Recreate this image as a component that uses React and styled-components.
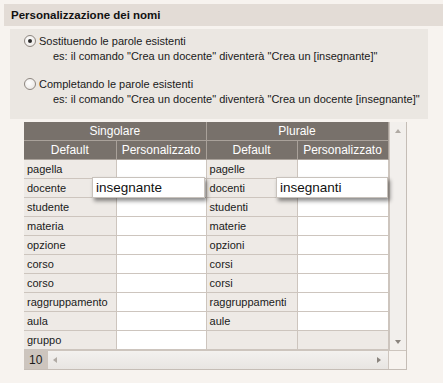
import React from "react";
import styled, { createGlobalStyle } from "styled-components";

const Global = createGlobalStyle`
  html, body { margin: 0; padding: 0; background: #f7f3ef; }
  body { font-family: "Liberation Sans", Arial, sans-serif; color: #1a1a1a; }
`;

const Page = styled.div`
  width: 443px;
  height: 383px;
  padding: 4px 0 0 4px;
  box-sizing: border-box;
  overflow: hidden;
`;

const SectionHeader = styled.div`
  height: 22px;
  line-height: 22px;
  background: #e3dcd6;
  padding-left: 7px;
  font-weight: bold;
  font-size: 11.5px;
  color: #111;
`;

const Panel = styled.div`
  margin: 3px 15px 0 6px;
  background: #ebe7e2;
  padding: 6px 0 13px 14px;
  display: flex;
  flex-direction: column;
`;

const OptionRow = styled.label`
  display: flex;
  align-items: center;
  gap: 3px;
  height: 12px;
  font-size: 11px;
  margin-top: ${(p) => p.$top}px;
`;

const Radio = styled.span`
  width: 10px;
  height: 10px;
  border-radius: 50%;
  border: 1px solid #8d8680;
  background: radial-gradient(circle at 40% 40%, #ffffff, #e6e2de);
  display: flex;
  align-items: center;
  justify-content: center;
  &::after {
    content: "";
    width: 4px;
    height: 4px;
    border-radius: 50%;
    background: ${(p) => (p.$checked ? "#2a2a2a" : "transparent")};
  }
`;

const Example = styled.div`
  font-size: 11px;
  padding-left: 29px;
  margin-top: 3px;
  line-height: 13px;
`;

const GridWrap = styled.div`
  position: relative;
  margin: 3px 0 0 20px;
  width: 382px;
  border-right: 1px solid #c5bdb6;
  border-bottom: 1px solid #c5bdb6;
`;

const Body = styled.div`
  display: flex;
`;

const Table = styled.table`
  border-collapse: collapse;
  table-layout: fixed;
  width: 364px;
`;

const HeadCell = styled.th`
  background: #78716b;
  color: #fff;
  font-weight: normal;
  font-size: 12px;
  height: 18px;
  padding: 0;
  border: 1px solid #a9a19a;
  border-top: none;
  text-align: center;
  &:first-child { border-left: none; }
`;

const Cell = styled.td`
  height: 18px;
  padding: 0 0 0 3px;
  font-size: 11px;
  white-space: nowrap;
  overflow: hidden;
  background: ${(p) => (p.$edit ? "#ffffff" : "#eeeae6")};
  border: 1px solid #cdc5be;
  &:first-child { border-left: none; }
`;

const VScroll = styled.div`
  width: 17px;
  border-left: 1px solid #cdc5be;
  background: #f2efec;
  display: flex;
  flex-direction: column;
  justify-content: space-between;
  align-items: center;
  padding: 7px 0 6px;
`;

const Arrow = styled.span`
  width: 0;
  height: 0;
  border-style: solid;
  ${(p) =>
    p.$dir === "up"
      ? "border-width: 0 3.5px 4px 3.5px; border-color: transparent transparent #b0aaa4 transparent;"
      : p.$dir === "down"
      ? "border-width: 4px 3.5px 0 3.5px; border-color: #8a847e transparent transparent transparent;"
      : p.$dir === "left"
      ? "border-width: 3.5px 4px 3.5px 0; border-color: transparent #b0aaa4 transparent transparent;"
      : "border-width: 3.5px 0 3.5px 4px; border-color: transparent transparent transparent #8a847e;"}
`;

const Footer = styled.div`
  display: flex;
  height: 18px;
  border-top: 1px solid #cdc5be;
`;

const Count = styled.div`
  width: 24px;
  background: #cdc5be;
  font-size: 12px;
  line-height: 18px;
  padding-left: 5px;
  box-sizing: border-box;
`;

const HScroll = styled.div`
  width: 340px;
  background: linear-gradient(#f3f1ef, #e8e5e2);
  display: flex;
  align-items: center;
  justify-content: space-between;
  padding: 0 7px 0 5px;
  box-sizing: border-box;
`;

const Corner = styled.div`
  width: 17px;
  border-left: 1px solid #cdc5be;
  background: #f7f3ef;
`;

const Editor = styled.div`
  position: absolute;
  top: 55px;
  left: ${(p) => p.$left}px;
  width: ${(p) => p.$width}px;
  height: 21px;
  line-height: 19px;
  box-sizing: border-box;
  background: #fff;
  border: 1px solid #c8c2bc;
  padding-left: 3px;
  font-size: 13.5px;
  color: #111;
  box-shadow: 2px 3px 4px rgba(0, 0, 0, 0.45);
`;

const rows = [
  ["pagella", "", "pagelle", ""],
  ["docente", "", "docenti", ""],
  ["studente", "", "studenti", ""],
  ["materia", "", "materie", ""],
  ["opzione", "", "opzioni", ""],
  ["corso", "", "corsi", ""],
  ["corso", "", "corsi", ""],
  ["raggruppamento", "", "raggruppamenti", ""],
  ["aula", "", "aule", ""],
  ["gruppo", "", null, null],
];

export default function App() {
  return (
    <>
      <Global />
      <Page>
        <SectionHeader>Personalizzazione dei nomi</SectionHeader>
        <Panel>
          <OptionRow $top={0}>
            <Radio $checked />
            Sostituendo le parole esistenti
          </OptionRow>
          <Example>es: il comando "Crea un docente" diventerà "Crea un [insegnante]"</Example>
          <OptionRow $top={15}>
            <Radio />
            Completando le parole esistenti
          </OptionRow>
          <Example>es: il comando "Crea un docente" diventerà "Crea un docente [insegnante]"</Example>
        </Panel>
        <GridWrap>
          <Body>
            <Table>
              <colgroup>
                <col style={{ width: 92 }} />
                <col style={{ width: 90 }} />
                <col style={{ width: 91 }} />
                <col style={{ width: 91 }} />
              </colgroup>
              <thead>
                <tr>
                  <HeadCell colSpan={2}>Singolare</HeadCell>
                  <HeadCell colSpan={2}>Plurale</HeadCell>
                </tr>
                <tr>
                  <HeadCell>Default</HeadCell>
                  <HeadCell>Personalizzato</HeadCell>
                  <HeadCell>Default</HeadCell>
                  <HeadCell>Personalizzato</HeadCell>
                </tr>
              </thead>
              <tbody>
                {rows.map((r, i) => (
                  <tr key={i}>
                    <Cell>{r[0]}</Cell>
                    <Cell $edit>{r[1]}</Cell>
                    <Cell>{r[2]}</Cell>
                    <Cell $edit={r[3] !== null}>{r[3]}</Cell>
                  </tr>
                ))}
              </tbody>
            </Table>
            <VScroll>
              <Arrow $dir="up" />
              <Arrow $dir="down" />
            </VScroll>
          </Body>
          <Footer>
            <Count>10</Count>
            <HScroll>
              <Arrow $dir="left" />
              <Arrow $dir="right" />
            </HScroll>
            <Corner />
          </Footer>
          <Editor $left={68} $width={113}>insegnante</Editor>
          <Editor $left={252} $width={112}>insegnanti</Editor>
        </GridWrap>
      </Page>
    </>
  );
}
